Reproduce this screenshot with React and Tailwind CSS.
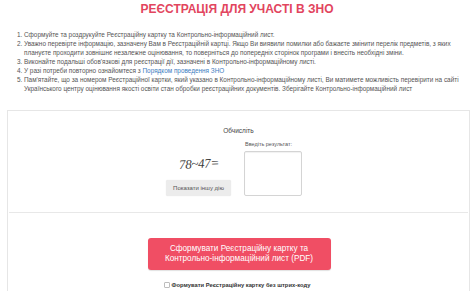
import React from "react";

const items = [
  "Сформуйте та роздрукуйте Реєстраційну картку та Контрольно-інформаційний лист.",
  "Уважно перевірте інформацію, зазначену Вам в Реєстраційній картці. Якщо Ви виявили помилки або бажаєте змінити перелік предметів, з яких плануєте проходити зовнішнє незалежне оцінювання, то поверніться до попередніх сторінок програми і внесіть необхідні зміни.",
  "Виконайте подальші обов'язкові для реєстрації дії, зазначені в Контрольно-інформаційному листі.",
  null,
  "Пам'ятайте, що за номером Реєстраційної картки, який указано в Контрольно-інформаційному листі, Ви матимете можливість перевірити на сайті Українського центру оцінювання якості освіти стан обробки реєстраційних документів. Зберігайте Контрольно-інформаційний лист",
];

const App = () => {
  return (
    <div className="w-[474px] h-[291px] overflow-hidden bg-white font-['Liberation_Sans',Arial,sans-serif]">
      <h1 className="pt-[2px] text-center text-[12px] leading-[14px] font-bold text-[#e2455e]">
        РЕЄСТРАЦІЯ ДЛЯ УЧАСТІ В ЗНО
      </h1>

      <ol className="mt-[14px] list-decimal pl-[24px] pr-[3px] text-[6.4px] leading-[9px] text-[#555]">
        {items.map((text, i) =>
          text ? (
            <li key={i}>{text}</li>
          ) : (
            <li key={i}>
              У разі потреби повторно ознайомтеся з{" "}
              <span className="text-[#3b7cc0]">Порядком проведення ЗНО</span>
            </li>
          )
        )}
      </ol>

      <div className="mt-[17px] ml-[7px] mr-[4px] border border-[#e6e6e6] pb-[30px]">
        <div className="pt-[15px] text-center text-[6.5px] leading-[9px] text-[#444]">Обчисліть</div>

        <div className="mt-[5px] flex items-end justify-center gap-[13px] pr-[9px]">
          <div className="flex flex-col items-center">
            <div className="pl-[2px] font-['Liberation_Serif',serif] text-[13px] leading-[16px] italic tracking-[-0.3px] text-[#3a3a3a] -rotate-3">
              78~47=
            </div>
            <button className="mt-[8px] h-[16px] w-[65px] rounded-[2px] bg-[#ececec] text-[6px] text-[#555] shadow-[0_0_1px_rgba(0,0,0,0.15)]">
              Показати іншу дію
            </button>
          </div>
          <div className="flex flex-col">
            <span className="pl-[1px] text-[5.5px] leading-[8px] text-[#555]">Введіть результат:</span>
            <div className="mt-[3px] h-[45px] w-[58px] rounded-[2px] border border-[#d4d4d4] bg-white shadow-[inset_0_1px_1px_rgba(0,0,0,0.06)]" />
          </div>
        </div>

        <div className="mx-[1px] mt-[16px] border-t border-[#e8e8e8]" />

        <div className="flex flex-col items-center pt-[25px] pl-[1px]">
          <button className="h-[32px] w-[183px] rounded-[3px] bg-[#f04e64] text-[8.2px] leading-[10px] text-white shadow-[0_1px_1px_rgba(0,0,0,0.12)]">
            Сформувати Реєстраційну картку та
            <br />
            Контрольно-інформаційний лист (PDF)
          </button>
          <label className="mt-[11px] flex items-center gap-[2px] pr-[4px]">
            <span className="h-[6px] w-[6px] rounded-[1px] border border-[#bdbdbd] bg-white" />
            <span className="text-[5.8px] leading-[8px] font-bold text-[#333]">
              Формувати Реєстраційну картку без штрих-коду
            </span>
          </label>
        </div>
      </div>
    </div>
  );
};

export default App;
